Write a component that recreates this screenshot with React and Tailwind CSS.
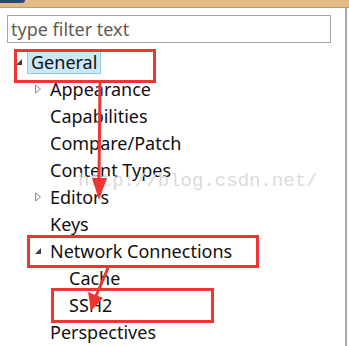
import React from 'react';

const rows = [
  { label: 'General', level: 0, icon: 'open', selected: true },
  { label: 'Appearance', level: 1, icon: 'closed' },
  { label: 'Capabilities', level: 1 },
  { label: 'Compare/Patch', level: 1 },
  { label: 'Content Types', level: 1 },
  { label: 'Editors', level: 1, icon: 'closed' },
  { label: 'Keys', level: 1 },
  { label: 'Network Connections', level: 1, icon: 'open' },
  { label: 'Cache', level: 2 },
  { label: 'SSH2', level: 2 },
  { label: 'Perspectives', level: 1 },
];

function Twisty({ type }) {
  if (type === 'open') {
    return (
      <svg width="8" height="8" viewBox="0 0 8 8">
        <path d="M7 1 L7 7 L1 7 Z" fill="#404040" />
      </svg>
    );
  }
  if (type === 'closed') {
    return (
      <svg width="8" height="10" viewBox="0 0 8 10">
        <path d="M1.5 1 L6.5 5 L1.5 9 Z" fill="none" stroke="#8a8a8a" strokeWidth="1" />
      </svg>
    );
  }
  return null;
}

function TreeRow({ row }) {
  const pad = row.level === 0 ? 'pl-[15px]' : row.level === 1 ? 'pl-[34px]' : 'pl-[53px]';
  return (
    <div className={`flex items-center h-[27px] ${pad}`}>
      <span className="w-[12px] flex items-center">
        <Twisty type={row.icon} />
      </span>
      <span
        className={
          row.selected
            ? 'px-[3px] h-[25px] flex items-center bg-[#cce8f7] border border-[#8fcbec]'
            : 'pl-[4px]'
        }
      >
        {row.label}
      </span>
    </div>
  );
}

export default function App() {
  return (
    <div className="w-[349px] h-[346px] bg-white relative overflow-hidden font-['Noto_Sans',sans-serif] text-[18px] text-[#111]">
      <div className="h-[8px] bg-[#e2bb89] border-b border-[#c49c6a] relative">
        <div className="absolute left-0 top-0 w-[25px] h-[3px] bg-[#2b4870] rounded-br-[3px]" />
      </div>

      <div className="flex">
        <div className="w-[345px]">
          <div className="pt-[7px] pl-[7px] pr-[14px]">
            <div className="h-[28px] border border-[#a4a4ad] flex items-center pl-[3px] text-[#625a54] leading-none">
              type filter text
            </div>
          </div>
          <div className="pt-[5px] leading-none">
            {rows.map((r) => (
              <TreeRow key={r.label} row={r} />
            ))}
          </div>
        </div>
        <div className="w-[2px] h-[338px] bg-[#a9a9a9]" />
      </div>

      <div className="absolute left-[78px] top-[172px] font-['Liberation_Mono',monospace] text-[19px] text-[#dadada] leading-none">
        http://blog.csdn.net/
      </div>

      <div className="absolute left-[14px] top-[49px] w-[142px] h-[34px] border-[3px] border-[#ef3434]" />
      <div className="absolute left-[27px] top-[235px] w-[232px] h-[33px] border-[3px] border-[#ef3434]" />
      <div className="absolute left-[51px] top-[288px] w-[163px] h-[35px] border-[3px] border-[#ef3434]" />

      <svg className="absolute left-0 top-0" width="349" height="346" viewBox="0 0 349 346">
        <line x1="100" y1="82" x2="99" y2="182" stroke="#ef3434" strokeWidth="3" />
        <path d="M92 178 L107 178 L99 200 Z" fill="#ef3434" />
        <line x1="108" y1="268" x2="96" y2="296" stroke="#ef3434" strokeWidth="3" />
        <path d="M88 292 L103 298 L91 311 Z" fill="#ef3434" />
      </svg>
    </div>
  );
}
